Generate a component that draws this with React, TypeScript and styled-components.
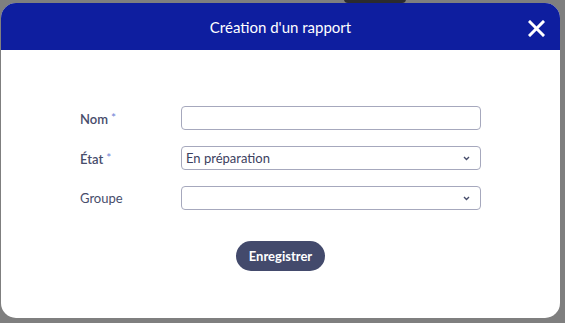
import * as React from "react"
import styled, { createGlobalStyle } from "styled-components"

const GlobalStyle = createGlobalStyle`
    html, body {
        margin: 0;
        padding: 0;
        width: 565px;
        height: 323px;
        overflow: hidden;
        background: #7f7f7f;
        font-family: "Source Sans Pro", Lato, "Noto Sans", sans-serif;
    }
`

const Backdrop = styled.div`
    position: relative;
    width: 565px;
    height: 323px;
    padding: 3px 5px 5px 1px;
    box-sizing: border-box;
    background: #7f7f7f;
`

const BehindPill = styled.div`
    position: absolute;
    top: -6px;
    left: 344px;
    width: 62px;
    height: 9px;
    border-radius: 4px;
    background: #2b2b2f;
`

const Modal = styled.div`
    position: relative;
    width: 559px;
    height: 315px;
    background: #fff;
    border-radius: 15px;
    overflow: hidden;
    display: flex;
    flex-direction: column;
`

const Header = styled.div`
    height: 47px;
    background: #0e1e9f;
    display: flex;
    align-items: center;
    justify-content: center;
    position: relative;
    color: #fff;
    font-size: 15px;
`

const CloseButton = styled.button`
    position: absolute;
    right: 14px;
    top: 15px;
    width: 20px;
    height: 20px;
    padding: 0;
    border: none;
    background: transparent;
    display: flex;
    align-items: center;
    justify-content: center;
    cursor: pointer;
`

const Body = styled.div`
    flex: 1;
    display: flex;
    flex-direction: column;
    align-items: center;
    padding-top: 56px;
`

const Form = styled.div`
    width: 401px;
    display: flex;
    flex-direction: column;
    gap: 16px;
`

const Row = styled.div`
    display: grid;
    grid-template-columns: 101px 300px;
    align-items: center;
    height: 24px;
`

const Label = styled.label<{ $bold?: boolean }>`
    font-size: 13px;
    color: #474d6b;
    font-weight: ${p => p.$bold ? 600 : 400};
`

const Star = styled.span`
    color: #6f82d6;
    font-weight: 400;
    margin-left: 3px;
    font-size: 12px;
    vertical-align: 2px;
`

const Field = styled.div`
    height: 24px;
    box-sizing: border-box;
    border: 1px solid #a6a8bd;
    border-radius: 4px;
    display: flex;
    align-items: center;
    justify-content: space-between;
    padding: 0 10px 0 4px;
    font-size: 13px;
    color: #3c4160;
`

const Footer = styled.div`
    display: flex;
    justify-content: center;
    margin-top: 31px;
`

const SaveButton = styled.button`
    width: 89px;
    height: 30px;
    border: none;
    border-radius: 15px;
    background: #434a6c;
    color: #fff;
    font-family: inherit;
    font-size: 13px;
    font-weight: 700;
    cursor: pointer;
`

const Chevron = () => (
    <svg width="7" height="5" viewBox="0 0 7 5">
        <path d="M1 1 L3.5 3.5 L6 1" fill="none" stroke="#474d6b" strokeWidth="1.4" />
    </svg>
)

const App = (): JSX.Element => {
    return (
        <Backdrop>
            <GlobalStyle />
            <BehindPill />
            <Modal>
                <Header>
                    Création d'un rapport
                    <CloseButton>
                        <svg width="17" height="17" viewBox="0 0 17 17">
                            <path d="M2 2 L15 15 M15 2 L2 15" stroke="#fff" strokeWidth="3" strokeLinecap="square" />
                        </svg>
                    </CloseButton>
                </Header>
                <Body>
                    <Form>
                        <Row>
                            <Label $bold>Nom<Star>*</Star></Label>
                            <Field />
                        </Row>
                        <Row>
                            <Label $bold>État<Star>*</Star></Label>
                            <Field>En préparation<Chevron /></Field>
                        </Row>
                        <Row>
                            <Label>Groupe</Label>
                            <Field><span /><Chevron /></Field>
                        </Row>
                    </Form>
                    <Footer>
                        <SaveButton>Enregistrer</SaveButton>
                    </Footer>
                </Body>
            </Modal>
        </Backdrop>
    )
}

export default App
